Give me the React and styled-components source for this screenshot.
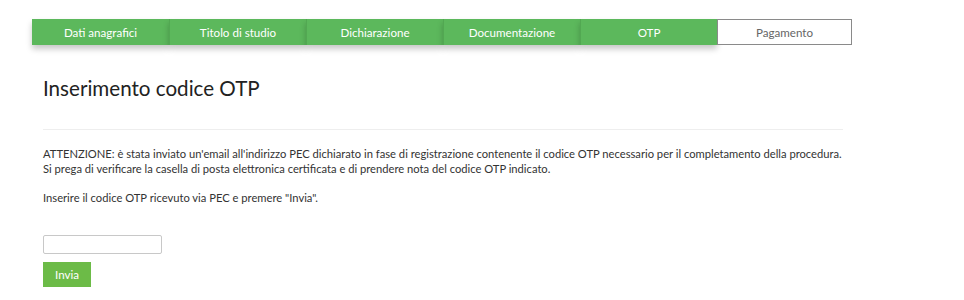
import React from 'react';
import styled, { createGlobalStyle } from 'styled-components';

const GlobalStyle = createGlobalStyle`
  html, body {
    margin: 0;
    padding: 0;
    background: #fff;
    font-family: "Lato", "Open Sans", sans-serif;
    color: #333;
  }
`;

const Page = styled.div`
  width: 964px;
  height: 300px;
  overflow: hidden;
  box-sizing: border-box;
  padding-top: 19px;
`;

const Steps = styled.div`
  display: flex;
  margin-left: 32px;
  width: 820px;
`;

const Step = styled.div`
  flex: 0 0 ${p => (p.$last ? '135px' : '137px')};
  height: 26px;
  box-sizing: border-box;
  display: flex;
  align-items: center;
  justify-content: center;
  font-size: 11.6px;
  background: ${p => (p.$done ? '#5cb85c' : '#fff')};
  color: ${p => (p.$done ? '#fff' : '#666')};
  border: ${p => (p.$done ? 'none' : '1px solid #8a8a8a')};
  border-left: ${p => (p.$done ? '1px solid #52a852' : '1px solid #8a8a8a')};
  box-shadow: ${p => (p.$done ? '0 4px 6px rgba(0,0,0,0.22)' : 'none')};
  &:first-child {
    border-left: none;
  }
`;

const Content = styled.div`
  margin-left: 43px;
  width: 800px;
`;

const Title = styled.h2`
  margin: 31px 0 0;
  font-family: "Lato", sans-serif;
  font-weight: 400;
  font-size: 20.6px;
  line-height: 24px;
  color: #222;
`;

const Rule = styled.hr`
  border: none;
  border-top: 1px solid #eee;
  margin: 29px 0 16px;
`;

const Text = styled.p`
  margin: 0 0 14px;
  font-size: 11.2px;
  line-height: 15px;
  color: #333;
  white-space: nowrap;
`;

const OtpInput = styled.input`
  display: block;
  margin-top: 30px;
  width: 119px;
  height: 19px;
  box-sizing: border-box;
  border: 1px solid #c8c8c8;
  border-radius: 2px;
  padding: 0 4px;
  font-family: inherit;
`;

const SendButton = styled.button`
  display: flex;
  align-items: center;
  justify-content: center;
  margin-top: 8px;
  width: 48px;
  height: 25px;
  border: none;
  background: #6cbb47;
  color: #fff;
  font-family: inherit;
  font-size: 11.6px;
  padding: 0;
`;

const steps = [
  'Dati anagrafici',
  'Titolo di studio',
  'Dichiarazione',
  'Documentazione',
  'OTP',
  'Pagamento',
];

export default function App() {
  return (
    <Page>
      <GlobalStyle />
      <Steps>
        {steps.map((s, i) => (
          <Step key={s} $done={i < 5} $last={i === 5}>
            {s}
          </Step>
        ))}
      </Steps>
      <Content>
        <Title>Inserimento codice OTP</Title>
        <Rule />
        <Text>
          ATTENZIONE: è stata inviato un'email all'indirizzo PEC dichiarato in fase di registrazione contenente il codice OTP necessario per il completamento della procedura.
          <br />
          Si prega di verificare la casella di posta elettronica certificata e di prendere nota del codice OTP indicato.
        </Text>
        <Text>Inserire il codice OTP ricevuto via PEC e premere "Invia".</Text>
        <OtpInput type="text" />
        <SendButton>Invia</SendButton>
      </Content>
    </Page>
  );
}
